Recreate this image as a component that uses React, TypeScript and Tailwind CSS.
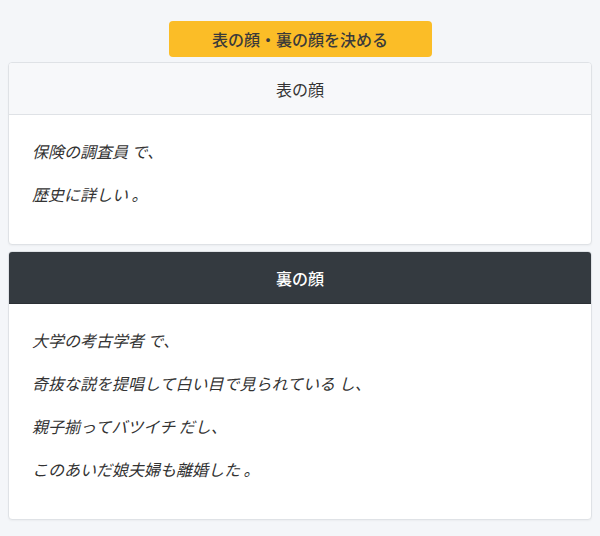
import React from 'react';

interface FaceCardProps {
  title: string;
  dark?: boolean;
  lines: [string, string][];
}

const FaceCard: React.FC<FaceCardProps> = ({ title, dark, lines }) => {
  return (
    <div className="bg-white border border-[#dfe2e6] rounded-[4px] shadow-[0_1px_2px_rgba(0,0,0,0.04)] overflow-hidden">
      {/* ヘッダー */}
      <div
        className={
          dark
            ? 'h-[52px] flex items-center justify-center bg-[#343a40] text-white font-medium text-base border-b border-[#2b3035]'
            : 'h-[52px] flex items-center justify-center bg-[#f7f8fa] text-[#333] text-base border-b border-[#dfe2e6]'
        }
      >
        {title}
      </div>
      {/* 本文 */}
      <div className="px-[23px] pt-[23px] pb-[20px] text-[#333] text-base">
        {lines.map(([em, rest], i) => (
          <p key={i} className="italic leading-[26px] mb-[17px]">
            <em>{em}</em> {rest}
          </p>
        ))}
      </div>
    </div>
  );
};

export default function App() {
  return (
    <div
      className="min-h-[536px] bg-[#f4f6f9] px-2 pt-[21px] pb-4"
      style={{ fontFamily: '"Noto Sans CJK JP", "Noto Sans", sans-serif' }}
    >
      <div className="flex justify-center mb-[5px]">
        <button className="w-[263px] h-[36px] bg-[#fbbd27] rounded-[4px] text-[#3a3a3a] text-base font-medium">
          表の顔・裏の顔を決める
        </button>
      </div>
      <div className="flex flex-col gap-[6px]">
        <FaceCard
          title="表の顔"
          lines={[
            ['保険の調査員', 'で、'],
            ['歴史に詳しい', '。'],
          ]}
        />
        <FaceCard
          title="裏の顔"
          dark
          lines={[
            ['大学の考古学者', 'で、'],
            ['奇抜な説を提唱して白い目で見られている', 'し、'],
            ['親子揃ってバツイチ', 'だし、'],
            ['このあいだ娘夫婦も離婚した', '。'],
          ]}
        />
      </div>
    </div>
  );
}
